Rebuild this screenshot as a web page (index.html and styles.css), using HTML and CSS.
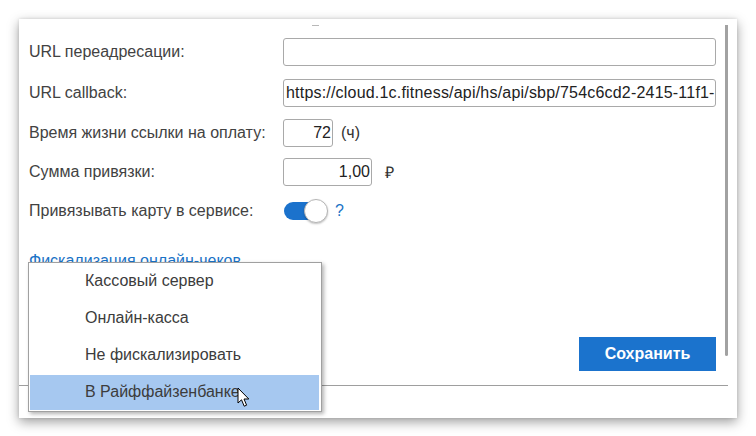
FILE: index.html
```html
<!DOCTYPE html>
<html lang="ru">
<head>
<meta charset="utf-8">
<title>Настройки</title>
<link rel="stylesheet" href="styles.css">
</head>
<body>
<div class="page">
  <div class="card">
    <div class="pane">
      <div class="scroll">
        <div class="tick"></div>
        <div class="form">
          <div class="row r1">
            <div class="label">URL переадресации:</div>
            <div class="input wide"></div>
          </div>
          <div class="row r2">
            <div class="label">URL callback:</div>
            <div class="input wide clip">https://cloud.1c.fitness/api/hs/api/sbp/754c6cd2-2415-11f1-</div>
          </div>
          <div class="row r3">
            <div class="label">Время жизни ссылки на оплату:</div>
            <div class="input num n72">72</div>
            <div class="unit">(ч)</div>
          </div>
          <div class="row r4">
            <div class="label">Сумма привязки:</div>
            <div class="input num n100">1,00</div>
            <div class="unit rub">₽</div>
          </div>
          <div class="row r5">
            <div class="label">Привязывать карту в сервисе:</div>
            <div class="toggle"><div class="knob"></div></div>
            <div class="help">?</div>
          </div>
          <div class="link">Фискализация онлайн-чеков</div>
          <div class="actions">
            <div class="btn">Сохранить</div>
          </div>
        </div>
        <div class="thumb"></div>
      </div>
      <div class="footer"></div>
    </div>
  </div>
  <div class="menu">
    <div class="item">Кассовый сервер</div>
    <div class="item">Онлайн-касса</div>
    <div class="item">Не фискализировать</div>
    <div class="item active">В Райффайзенбанке</div>
  </div>
  <svg class="cursor" width="14" height="22" viewBox="0 0 14 22">
    <path d="M1 1 L1 16 L4.5 12.8 L7.2 19.2 L9.6 18.2 L7 12 L11.8 12 Z" fill="#fff" stroke="#000" stroke-width="1" stroke-linejoin="round"/>
  </svg>
</div>
</body>
</html>
```

FILE: styles.css
```css
html, body {
  margin: 0;
  padding: 0;
  background: #ffffff;
}
body {
  font-family: "Liberation Sans", Arial, sans-serif;
  font-size: 16px;
  color: #424242;
}
.page {
  position: relative;
  width: 756px;
  height: 436px;
  padding: 19px 19px 18px 19px;
  box-sizing: border-box;
}
.card {
  width: 718px;
  height: 399px;
  background: #fff;
  box-shadow: 0 4px 11px rgba(0, 0, 0, 0.38), 0 0 3px rgba(0, 0, 0, 0.12);
  display: flex;
  padding-right: 9px;
  box-sizing: border-box;
}
.pane {
  flex: 1;
  display: flex;
  flex-direction: column;
}
.scroll {
  position: relative;
  height: 367px;
  border-bottom: 1px solid #9e9e9e;
  box-sizing: border-box;
  display: flex;
}
.tick {
  position: absolute;
  left: 293px;
  top: 6px;
  width: 7px;
  height: 1px;
  background: #b8b8b8;
}
.form {
  flex: 1;
  padding: 19px 0 0 10px;
  display: flex;
  flex-direction: column;
}
.thumb {
  width: 3px;
  margin: 6px 0 29px 6px;
  background: #a2a2a2;
  border-radius: 0 0 2px 2px;
}
.row {
  display: flex;
  align-items: center;
  height: 28px;
}
.label {
  width: 254px;
  flex: none;
  white-space: nowrap;
}
.input {
  height: 28px;
  border: 1px solid #a9a9a9;
  border-radius: 3px;
  box-sizing: border-box;
  background: #fff;
  line-height: 26px;
  padding: 0 2px;
  color: #222;
  font-size: 16px;
}
.wide {
  width: 433px;
}
.clip {
  overflow: hidden;
  white-space: nowrap;
  letter-spacing: 0.2px;
}
.num {
  text-align: right;
  padding-right: 1px;
}
.n72 { width: 50px; }
.n100 { width: 89px; }
.r2 { margin-top: 13px; }
.r3 { margin-top: 12px; }
.r4 { margin-top: 11px; }
.r5 { margin-top: 11px; }
.unit {
  margin-left: 8px;
  color: #333;
}
.rub {
  margin-left: 13px;
}
.toggle {
  margin-left: 1px;
  width: 44px;
  height: 24px;
  position: relative;
  display: flex;
  align-items: center;
}
.toggle::before {
  content: "";
  width: 36px;
  height: 18px;
  border-radius: 9px;
  background: #1b72cc;
}
.knob {
  position: absolute;
  right: 0;
  top: 0;
  width: 22px;
  height: 22px;
  border-radius: 50%;
  background: #fff;
  border: 1px solid #b5b5b5;
  box-shadow: 0 1px 2px rgba(0,0,0,0.25);
}
.help {
  margin-left: 7px;
  color: #1a73c6;
  font-size: 16px;
}
.link {
  margin-top: 27px;
  color: #1a73c6;
  text-decoration: underline;
  text-underline-offset: 3px;
  width: max-content;
}
.actions {
  margin-top: 67px;
  display: flex;
  justify-content: flex-end;
  padding-right: 3px;
}
.btn {
  width: 137px;
  height: 34px;
  background: #1b73cd;
  color: #fff;
  font-weight: bold;
  font-size: 16px;
  display: flex;
  align-items: center;
  justify-content: center;
}
.footer {
  flex: 1;
}
.menu {
  position: absolute;
  left: 28px;
  top: 262px;
  width: 294px;
  height: 150px;
  box-sizing: border-box;
  background: #fff;
  border: 1px solid #a0a0a0;
  box-shadow: 2px 2px 4px rgba(0, 0, 0, 0.3);
  padding: 1px 2px 2px 1px;
  display: flex;
  flex-direction: column;
}
.item {
  height: 37px;
  line-height: 33px;
  padding-left: 55px;
  color: #3c3c3c;
  flex: none;
}
.item.active {
  background: #a6c8f0;
  height: 35px;
}
.cursor {
  position: absolute;
  left: 237px;
  top: 387px;
}
```
